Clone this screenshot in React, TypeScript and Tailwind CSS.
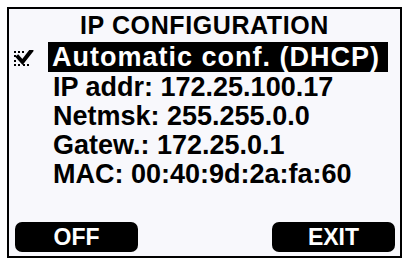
export default function App() {
  const rows = [
    "IP addr: 172.25.100.17",
    "Netmsk: 255.255.0.0",
    "Gatew.: 172.25.0.1",
    "MAC: 00:40:9d:2a:fa:60",
  ];

  return (
    <div className="w-[404px] h-[260px] bg-white pt-[7px] pl-[7px] font-['Liberation_Sans',Arial,sans-serif] font-bold text-black">
      {/* LCD frame */}
      <div className="w-[395px] h-[251px] border-2 border-black bg-[#f8f8fc] flex flex-col">
        {/* Title */}
        <div className="mt-[1px] h-[30px] leading-[30px] text-[25px] tracking-[0.6px] text-center">
          IP CONFIGURATION
        </div>

        {/* Selected option */}
        <div className="mt-[2px] h-[30px] flex items-center">
          <div className="w-[39px] pl-[5px] pt-[2px] flex items-center">
            <svg width="20" height="17" viewBox="0 0 20 17">
              <g fill="#000">
                <rect x="0" y="1" width="2" height="2" />
                <rect x="4" y="1" width="2" height="2" />
                <rect x="8" y="1" width="2" height="2" />
                <rect x="0" y="5" width="2" height="2" />
                <rect x="0" y="10" width="2" height="2" />
                <rect x="0" y="14" width="2" height="2" />
                <rect x="4" y="14" width="2" height="2" />
                <rect x="9" y="14" width="2" height="2" />
                <rect x="13" y="14" width="2" height="2" />
              </g>
              <path
                d="M4 7 L8.5 12 L17 1"
                stroke="#000"
                strokeWidth="4"
                fill="none"
                strokeLinecap="square"
              />
            </svg>
          </div>
          <div className="w-[340px] h-[30px] bg-black text-white pl-[4px] text-[27px] leading-[31px] tracking-[1px] whitespace-nowrap">
            Automatic conf. (DHCP)
          </div>
        </div>

        {/* Info rows */}
        <div className="mt-[1px] pl-[44px] flex flex-col">
          {rows.map((r) => (
            <div
              key={r}
              className="h-[29px] leading-[29px] text-[27px] whitespace-nowrap"
            >
              {r}
            </div>
          ))}
        </div>

        {/* Soft keys */}
        <div className="mt-auto mb-[4px] pl-[6px] pr-[5px] flex justify-between">
          {["OFF", "EXIT"].map((b) => (
            <div
              key={b}
              className="w-[123px] h-[30px] bg-black rounded-[7px] text-white text-[23px] leading-[31px] text-center"
            >
              {b}
            </div>
          ))}
        </div>
      </div>
    </div>
  );
}
